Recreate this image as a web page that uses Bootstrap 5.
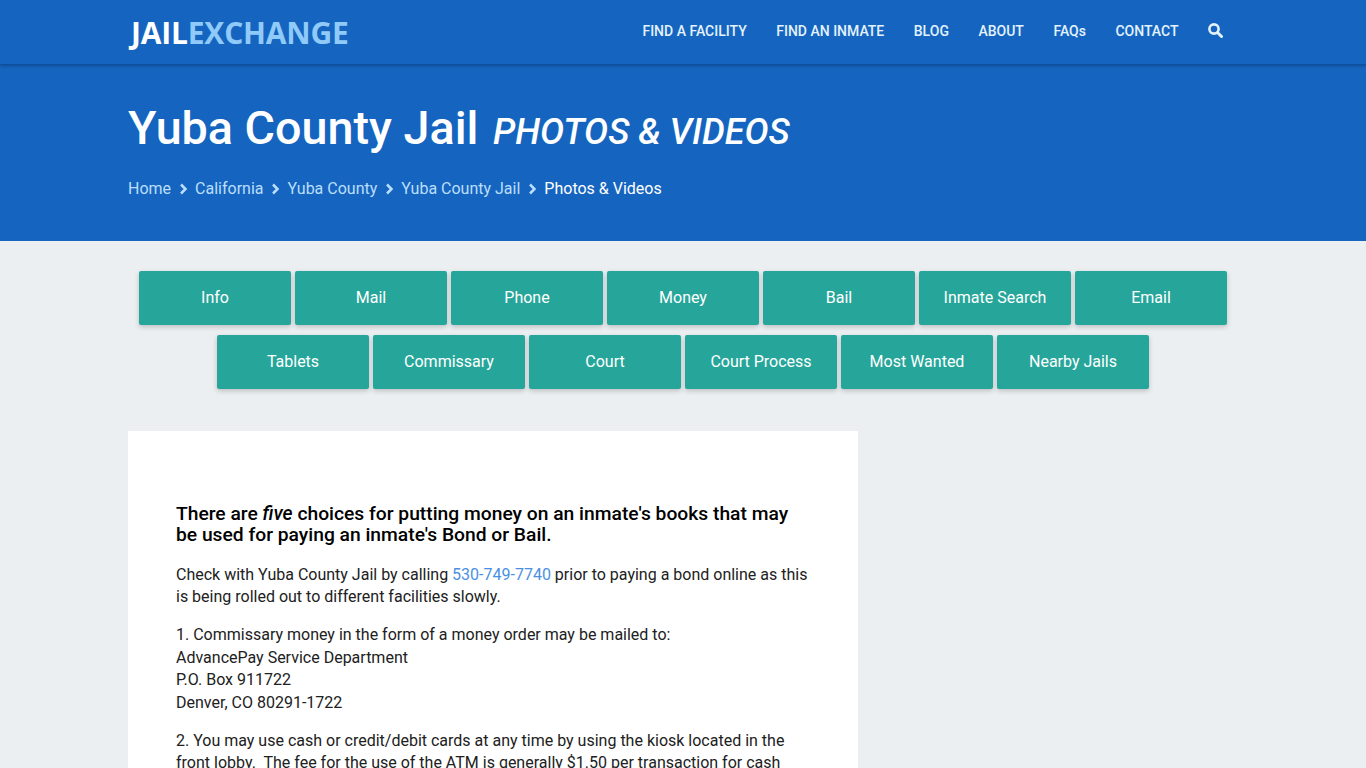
<!DOCTYPE html>
<html lang="en">
<head>
<meta charset="utf-8">
<title>Yuba County Jail Photos &amp; Videos</title>
<link href="https://cdn.jsdelivr.net/npm/bootstrap@5.3.0/dist/css/bootstrap.min.css" rel="stylesheet">
<style>
body{background:#eceff1;font-family:Roboto,"Liberation Sans",sans-serif;font-size:16px;line-height:22.4px;color:#212121}
.wrap-box{width:1140px;max-width:1140px;padding-left:15px;padding-right:15px}
.top-bar{background:#1565c0;height:65px;border-bottom:1px solid #0d4f9e;box-shadow:0 1px 3px rgba(0,0,0,.25);padding:0;position:relative}
.brand-logo{font-family:"Open Sans",sans-serif;font-weight:700;font-size:30px;line-height:1;letter-spacing:-.2px;color:#fff;text-decoration:none;padding:2px 0 0;margin:0 0 0 3px}
.brand-logo span{color:#90caf9}
.top-bar .nav-link{color:#e3f2fd;font-size:14px;font-weight:500;padding:0;line-height:20px}
.top-links{gap:29.5px;margin-right:15px;margin-top:-3px}
.hero-band{background:#1565c0;height:176px;padding-top:34px}
.hero-title{font-size:46.7px;font-weight:500;line-height:58px;color:#fff;margin:0}
.hero-title em{font-size:36px;font-weight:500;margin-left:3px}
.crumb-list{margin:16px 0 0;--bs-breadcrumb-divider:none;font-size:16px;line-height:24px}
.crumb-list .breadcrumb-item{color:#fff;padding:0;display:flex;align-items:center}
.crumb-list .breadcrumb-item a{color:#bbdefb;text-decoration:none}
.crumb-list .breadcrumb-item+.breadcrumb-item::before{display:none}
.crumb-sep{width:24px;display:flex;justify-content:center}
.tab-rows{padding-top:30px;gap:10px}
.tab-btn{width:152px;height:54px;background:#26a69a;color:#fff;border:0;border-radius:2px;font-size:16px;display:flex;align-items:center;justify-content:center;box-shadow:0 2px 5px rgba(0,0,0,.2);padding:0}
.tab-btn:hover{background:#26a69a;color:#fff}
.main-panel{background:#fff;border:0;border-radius:0;margin-top:42px;padding:72px 48px 48px;width:730px}
.main-panel h2{font-size:19.26px;font-weight:500;line-height:21px;color:#000;margin:0 0 19px}
.main-panel p{margin:0 0 15.6px}
.main-panel a{color:#4a90e2;text-decoration:none}
</style>
</head>
<body>
<nav class="navbar top-bar">
  <div class="container wrap-box d-flex justify-content-between align-items-center flex-nowrap">
    <a class="navbar-brand brand-logo" href="#">JAIL<span>EXCHANGE</span></a>
    <ul class="nav top-links align-items-center">
      <li class="nav-item"><a class="nav-link" href="#">FIND A FACILITY</a></li>
      <li class="nav-item"><a class="nav-link" href="#">FIND AN INMATE</a></li>
      <li class="nav-item"><a class="nav-link" href="#">BLOG</a></li>
      <li class="nav-item"><a class="nav-link" href="#">ABOUT</a></li>
      <li class="nav-item"><a class="nav-link" href="#">FAQs</a></li>
      <li class="nav-item"><a class="nav-link" href="#">CONTACT</a></li>
      <li class="nav-item"><a class="nav-link" href="#" aria-label="Search"><svg width="15" height="15" viewBox="0 0 15 15" class="d-block"><circle cx="6" cy="6" r="4.6" fill="none" stroke="#e3f2fd" stroke-width="2.600"/><path d="M9.500 9.500 13.500 13.500" stroke="#e3f2fd" stroke-width="3" stroke-linecap="round"/></svg></a></li>
    </ul>
  </div>
</nav>
<header class="hero-band">
  <div class="container wrap-box">
    <h1 class="hero-title">Yuba County Jail <em>PHOTOS &amp; VIDEOS</em></h1>
    <ol class="breadcrumb crumb-list">
      <li class="breadcrumb-item"><a href="#">Home</a></li>
      <li class="breadcrumb-item"><span class="crumb-sep"><svg width="9" height="12" viewBox="0 0 9 12"><path d="M2 1.500 6.500 6 2 10.500" fill="none" stroke="#bbdefb" stroke-width="2.500"/></svg></span><a href="#">California</a></li>
      <li class="breadcrumb-item"><span class="crumb-sep"><svg width="9" height="12" viewBox="0 0 9 12"><path d="M2 1.500 6.500 6 2 10.500" fill="none" stroke="#bbdefb" stroke-width="2.500"/></svg></span><a href="#">Yuba County</a></li>
      <li class="breadcrumb-item"><span class="crumb-sep"><svg width="9" height="12" viewBox="0 0 9 12"><path d="M2 1.500 6.500 6 2 10.500" fill="none" stroke="#bbdefb" stroke-width="2.500"/></svg></span><a href="#">Yuba County Jail</a></li>
      <li class="breadcrumb-item active"><span class="crumb-sep"><svg width="9" height="12" viewBox="0 0 9 12"><path d="M2 1.500 6.500 6 2 10.500" fill="none" stroke="#bbdefb" stroke-width="2.500"/></svg></span>Photos &amp; Videos</li>
    </ol>
  </div>
</header>
<main class="container wrap-box">
  <div class="d-flex flex-column align-items-center tab-rows">
    <div class="d-flex justify-content-center gap-1">
      <a class="btn tab-btn" href="#">Info</a>
      <a class="btn tab-btn" href="#">Mail</a>
      <a class="btn tab-btn" href="#">Phone</a>
      <a class="btn tab-btn" href="#">Money</a>
      <a class="btn tab-btn" href="#">Bail</a>
      <a class="btn tab-btn" href="#">Inmate Search</a>
      <a class="btn tab-btn" href="#">Email</a>
    </div>
    <div class="d-flex justify-content-center gap-1">
      <a class="btn tab-btn" href="#">Tablets</a>
      <a class="btn tab-btn" href="#">Commissary</a>
      <a class="btn tab-btn" href="#">Court</a>
      <a class="btn tab-btn" href="#">Court Process</a>
      <a class="btn tab-btn" href="#">Most Wanted</a>
      <a class="btn tab-btn" href="#">Nearby Jails</a>
    </div>
  </div>
  <article class="card main-panel">
    <h2>There are <em>five</em> choices for putting money on an inmate's books that may be used for paying an inmate's Bond or Bail.</h2>
    <p>Check with Yuba County Jail by calling <a href="#">530-749-7740</a> prior to paying a bond online as this is being rolled out to different facilities slowly.</p>
    <p>1. Commissary money in the form of a money order may be mailed to:<br>AdvancePay Service Department<br>P.O. Box 911722<br>Denver, CO 80291-1722</p>
    <p>2. You may use cash or credit/debit cards at any time by using the kiosk located in the front lobby.&nbsp; The fee for the use of the ATM is generally $1.50 per transaction for cash</p>
  </article>
</main>
<script src="https://cdn.jsdelivr.net/npm/bootstrap@5.3.0/dist/js/bootstrap.bundle.min.js"></script>
</body>
</html>
